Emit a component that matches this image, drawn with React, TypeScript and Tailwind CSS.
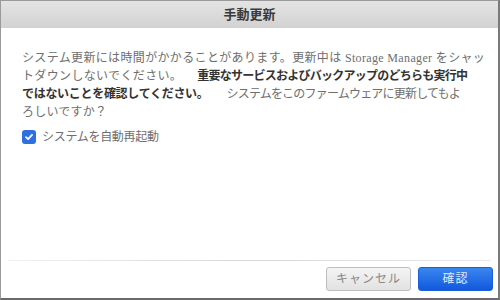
import React from "react";

export default function App() {
  return (
    <div
      className="w-[500px] h-[300px] bg-white flex flex-col overflow-hidden border-l border-t border-[#9a9a9a] border-r-2 border-b-2 border-r-[#7a7a7a] border-b-[#6a6a6a]"
      style={{ fontFamily: '"Liberation Serif", "Noto Sans CJK JP", serif' }}
    >
      <div className="h-[27px] shrink-0 flex items-center justify-center bg-gradient-to-b from-[#e4e4e4] to-[#d2d2d2] text-[13px] text-[#3a3a3a] font-bold">
        手動更新
      </div>
      <div className="flex-1 flex flex-col pl-[21px] pt-[21px]">
        <p className="whitespace-nowrap text-[12px] leading-[18px] text-[#6e6e6e]">
          <span className="tracking-[0.35px]">
            システム更新には時間がかかることがあります。更新中は Storage Manager をシャッ
          </span>
          <br />
          <span className="tracking-[0.35px]">トダウンしないでください。</span>
          <span className="ml-[15px] font-bold text-[#333] tracking-[-0.75px]">
            重要なサービスおよびバックアップのどちらも実行中
          </span>
          <br />
          <span className="font-bold text-[#333] tracking-[-0.3px]">
            ではないことを確認してください。
          </span>
          <span className="ml-[18px] tracking-[-0.8px]">
            システムをこのファームウェアに更新してもよ
          </span>
          <br />
          <span className="tracking-[0.2px]">ろしいですか？</span>
        </p>
        <label className="mt-[7px] flex items-center gap-[6px] text-[12px] text-[#6e6e6e] tracking-[-0.3px]">
          <span className="w-[14px] h-[14px] rounded-[3px] bg-[#2f6fe0] flex items-center justify-center">
            <svg width="10" height="10" viewBox="0 0 10 10">
              <path d="M2 5.2 L4.1 7.2 L8 2.8" stroke="white" strokeWidth="1.8" fill="none" strokeLinecap="round" strokeLinejoin="round" />
            </svg>
          </span>
          システムを自動再起動
        </label>
      </div>
      <div className="mx-[7px] h-px bg-gradient-to-r from-[#f0f0f0] via-[#d8d8d8] to-[#e8e8e8]" />
      <div className="h-[37px] shrink-0 flex items-start justify-end gap-[7px] pt-[6px] pr-[5px]">
        <button className="w-[85px] h-[24px] rounded-[3px] border border-[#bdbdbd] bg-gradient-to-b from-[#f4f4f4] to-[#e2e2e2] text-[12px] text-[#888] tracking-[1px]">
          キャンセル
        </button>
        <button className="w-[75px] h-[24px] rounded-[3px] border border-[#1c5fd8] bg-gradient-to-b from-[#3a86f0] to-[#1258dc] text-[12px] text-[#dfe8ff] tracking-[1px]">
          確認
        </button>
      </div>
    </div>
  );
}
